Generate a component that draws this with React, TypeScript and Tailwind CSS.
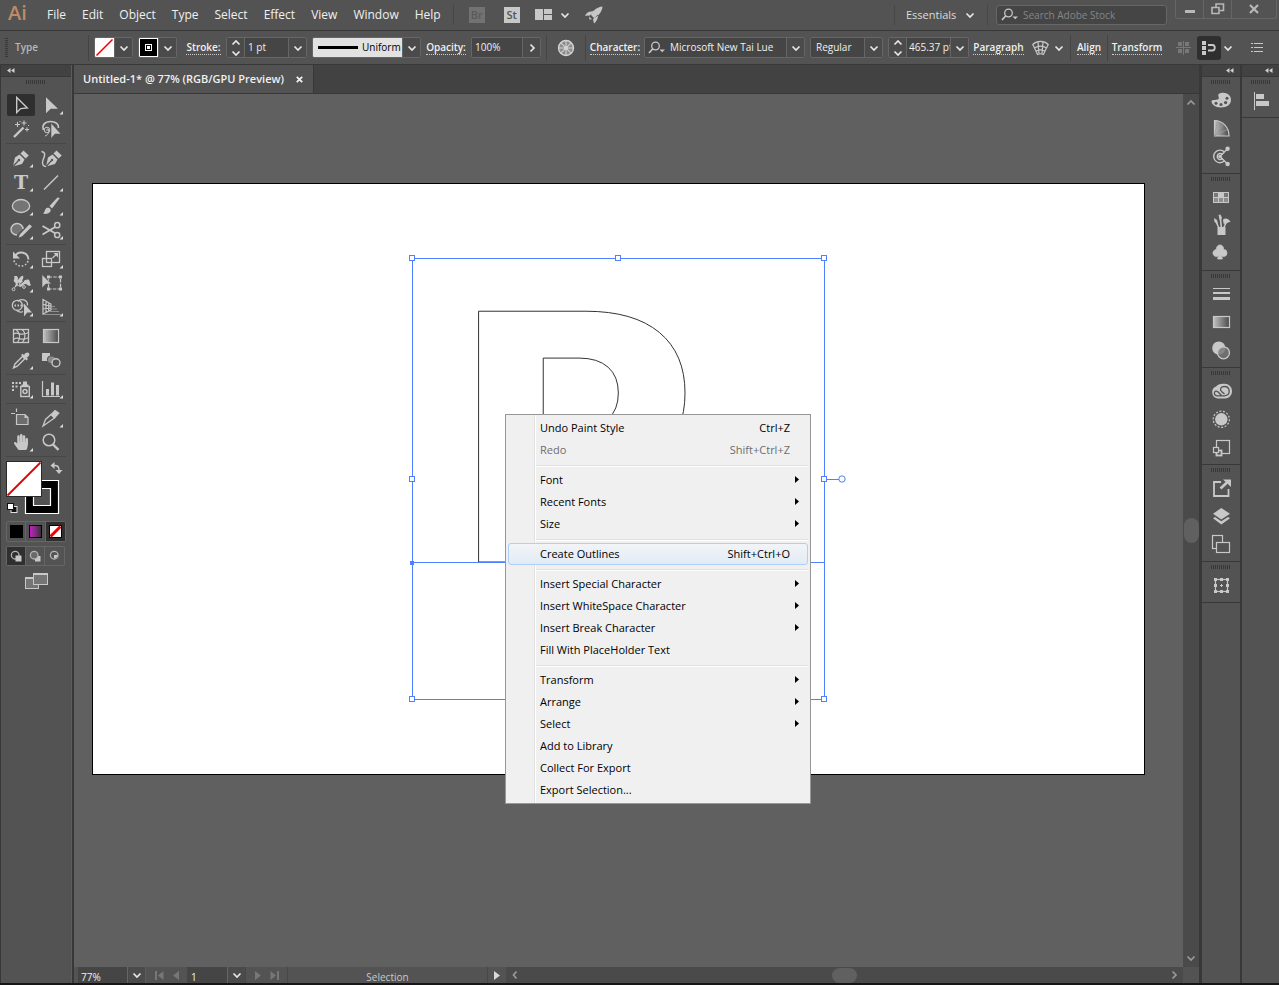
import { ReactNode } from "react";
import clsx from "clsx";
import { BsSuitClubFill } from "react-icons/bs";
import { FaHandPaper } from "react-icons/fa";

type Tool = { name: string; art: ReactNode; more?: boolean };

const INK = "#c8c8c8";
const PANEL = "#535353";

const menus = ["File", "Edit", "Object", "Type", "Select", "Effect", "View", "Window", "Help"];

const penNib = (
  <>
    <path d="M6 20.5 8 11.5 12.5 8.5 17.5 13.5 15 18Z" fill={INK} stroke="none" />
    <path d="M13.5 7.5 16.5 4.5 21.8 9.5 18.6 12.6Z" fill={INK} stroke="none" />
    <path d="M6 20.5 11.5 14.5" stroke={PANEL} strokeWidth="1.2" />
    <circle cx="12" cy="14" r="1.2" fill={PANEL} stroke="none" />
  </>
);

const toolGroups: Tool[][] = [
  [
    { name: "Selection", art: <path d="M9.7 4.5V19.5L13.6 15.6 20.3 15Z" strokeWidth="1.4" /> },
    { name: "Direct Selection", more: true, art: <path d="M9 4.2V20.2L13.6 15.8H21Z" fill={INK} stroke="none" /> },
    {
      name: "Magic Wand",
      art: (
        <>
          <path d="M7 20 16.5 10.5" strokeWidth="2.4" />
          <path d="M10.5 5v5M8 7.5h5M17 3.5v5M14.5 6h5M20 10.5v4M18 12.5h4M13 4v1M21 8.5h1" strokeWidth="1.1" />
        </>
      ),
    },
    {
      name: "Lasso",
      art: (
        <>
          <path d="M6.5 13C4.5 8 8 4.5 13.5 4.5S22 7.5 21.5 11" strokeWidth="1.6" />
          <circle cx="10" cy="13" r="2.8" />
          <path d="M9 13h3M10.5 11.5C13 13 12 18 8 19" />
          <path d="M14 6V21.5L18 17H24Z" fill={INK} stroke={PANEL} strokeWidth="0.6" />
        </>
      ),
    },
  ],
  [
    { name: "Pen", more: true, art: penNib },
    {
      name: "Curvature",
      art: (
        <>
          <g transform="translate(3 0)">{penNib}</g>
          <path d="M4.5 5.5C9.5 6.5 7.5 10.5 6 14C4.5 18.5 6.5 20.5 9 20.5" strokeWidth="1.4" />
        </>
      ),
    },
    {
      name: "Type",
      more: true,
      art: (
        <text x="14" y="19" textAnchor="middle" fill={INK} stroke="none" className="font-['DejaVu_Serif',serif] text-[19px] font-bold">
          T
        </text>
      ),
    },
    { name: "Line Segment", more: true, art: <path d="M7 19.5 21 5.5" strokeWidth="1.4" /> },
    { name: "Ellipse", more: true, art: <ellipse cx="14" cy="12" rx="8.7" ry="6.5" fill="#757575" strokeWidth="1.3" /> },
    {
      name: "Paintbrush",
      more: true,
      art: (
        <>
          <path d="M22.8 4 20.5 3.6 12.5 12 15 14.6Z" fill={INK} stroke="none" />
          <path d="M6 19.5C8 18.5 7.5 15 10 13.8 12.5 13 14.5 15.5 13.4 17.5 12 20 8.5 20.3 6 19.5Z" fill={INK} stroke="none" />
        </>
      ),
    },
    {
      name: "Shaper",
      more: true,
      art: (
        <>
          <path d="M10 17C6.5 17 4 14.5 4 11.3S6.7 5.5 10 5.5 16 8 16 11" fill="#757575" strokeWidth="1.4" />
          <path d="M11.5 19.8 13 16.2 22.5 6.3 25 8.4 15.2 18.3Z" fill={INK} stroke="none" />
        </>
      ),
    },
    {
      name: "Scissors",
      more: true,
      art: (
        <>
          <circle cx="20.2" cy="7.2" r="2.6" strokeWidth="1.5" />
          <circle cx="20.2" cy="17" r="2.6" strokeWidth="1.5" />
          <path d="M5.5 8 18.2 15.2M5.5 16.5 18.2 9" strokeWidth="1.8" />
        </>
      ),
    },
  ],
  [
    {
      name: "Rotate",
      more: true,
      art: (
        <>
          <path d="M8.5 8.5C12 3.5 21 5 21.5 12.5" strokeWidth="2" />
          <path d="M6 4.5V11.5H13Z" fill={INK} stroke="none" />
          <path d="M21 14C19 20.5 9 21 7 13.5" strokeWidth="1.6" strokeDasharray="1.6 1.8" />
        </>
      ),
    },
    {
      name: "Scale",
      more: true,
      art: (
        <>
          <rect x="9.5" y="4.5" width="13" height="11" strokeWidth="1.3" />
          <rect x="5.5" y="11.5" width="9" height="8" strokeWidth="1.3" />
          <path d="M15.5 11 20 6.8" strokeWidth="1.3" />
          <path d="M16.5 6H21V10.5Z" fill={INK} stroke="none" />
        </>
      ),
    },
    {
      name: "Width",
      more: true,
      art: (
        <>
          <path d="M7 5.5C10 4 12 6.5 10.5 9.5 13 6.5 14.5 4 16 5 17.5 6.5 14.5 9.5 15.5 10.5 17.5 10 20 7.5 22 9 23.5 10.5 22.5 13 24 14 21 16.5 20.5 12.5 18 13 15.5 14 14.5 17 12 15.5 10.5 14 9 17 6.5 17.5 9 14 9.5 12 7.5 11 5.5 9.5 8.5 8 7 5.5Z" fill={INK} stroke="none" />
          <path d="M7 18 17 10" stroke={PANEL} />
          <circle cx="6.5" cy="18.3" r="1.4" fill={PANEL} />
          <circle cx="11.5" cy="13" r="1.4" fill={PANEL} />
          <circle cx="17" cy="16" r="1.4" fill={PANEL} />
        </>
      ),
    },
    {
      name: "Free Transform",
      art: (
        <>
          <rect x="11.5" y="6" width="12" height="12" strokeWidth="1.2" strokeDasharray="3.5 1.2" />
          <path d="M10 4.5h3v3h-3zM22 4.5h3v3h-3zM10 16.5h3v3h-3zM22 16.5h3v3h-3z" fill={INK} stroke="none" />
          <path d="M5 3.5V17L8.8 13H14.5Z" fill={INK} stroke={PANEL} strokeWidth="0.6" />
        </>
      ),
    },
    {
      name: "Shape Builder",
      more: true,
      art: (
        <>
          <circle cx="10.3" cy="10.3" r="5" strokeWidth="1.3" />
          <path d="M11 6.5C13 3.5 21 4 20.5 10.5M9.5 15C11 17 14 17.5 16 16.5" strokeWidth="1.3" />
          <path d="M7.5 10.5H17" strokeWidth="1.8" strokeDasharray="1.5 1.5" />
          <path d="M17 8.5V21.5L20.3 17.5H25Z" fill={INK} stroke="none" />
        </>
      ),
    },
    {
      name: "Perspective Grid",
      more: true,
      art: (
        <>
          <path d="M6 4.5V19L14 15V9ZM6 9.3 14 11M6 14 14 13M9 6V17.5M11.7 7.5V16" strokeWidth="1.2" />
          <path d="M15 11.5H18M14.5 14H20M12 16.5H22M6 19.5H24" stroke="#909090" strokeWidth="1.2" />
        </>
      ),
    },
  ],
  [
    {
      name: "Mesh",
      art: (
        <>
          <rect x="6.5" y="5.5" width="15" height="13" strokeWidth="1.3" />
          <path d="M6.5 10C11 6.5 13 13.5 21.5 8.5M6.5 15.5C11 11 14 18.5 21.5 13.5M9 5.5C13 9 13.5 14 10.5 18.5M15 5.5C19.5 9 18 15 15.5 18.5" strokeWidth="1.2" />
        </>
      ),
    },
    { name: "Gradient", art: <rect x="6.5" y="5.5" width="15" height="13" fill="url(#fade)" strokeWidth="1.2" /> },
    {
      name: "Eyedropper",
      more: true,
      art: (
        <>
          <path d="M6.5 20 8 16 15.5 8.5 17.8 10.8 10.3 18.2Z" strokeWidth="1.4" />
          <path d="M14 7 15.5 5.8 17 7C18.5 4.5 21 4 22 5.2 23 6.5 22 8.5 19.8 9.8L21 11 19.5 12.5Z" fill={INK} stroke="none" />
        </>
      ),
    },
    {
      name: "Blend",
      art: (
        <>
          <rect x="5" y="5" width="8" height="8" fill={INK} stroke="none" />
          <rect x="10.5" y="8" width="8" height="7.5" rx="3" fill="#8a8a8a" stroke={PANEL} />
          <circle cx="19" cy="14.8" r="4" fill={PANEL} strokeWidth="1.4" />
        </>
      ),
    },
  ],
  [
    {
      name: "Symbol Sprayer",
      more: true,
      art: (
        <>
          <path d="M5 5h2v2H5zM8.5 5h2v2h-2zM12 5h2v2h-2zM5 8.5h2v2H5zM8.5 8.5h2v2h-2zM5 12h2v2H5z" fill={INK} stroke="none" />
          <path d="M16 4.5h4V7.5h1.5v1.5h-7V7.5H16Z" fill={INK} stroke="none" />
          <rect x="13.8" y="9.5" width="8.5" height="10" strokeWidth="1.4" />
          <circle cx="18" cy="14.5" r="2" strokeWidth="1.5" />
        </>
      ),
    },
    {
      name: "Column Graph",
      more: true,
      art: (
        <>
          <path d="M5.5 4V19.5H23" strokeWidth="1.2" />
          <path d="M9 12h3v6.5H9zM14 5.5h3v13h-3zM19 8h3v10.5h-3z" fill={INK} stroke="none" />
        </>
      ),
    },
  ],
  [
    {
      name: "Artboard",
      art: (
        <>
          <path d="M4 7.5H8M9.5 2.5V6" strokeWidth="1.2" />
          <path d="M9.5 8.5H18L21 11.5V18.5H9.5Z" fill="#6d6d6d" strokeWidth="1.2" />
          <path d="M17.5 8.5V12H21Z" fill={INK} stroke="none" />
        </>
      ),
    },
    {
      name: "Slice",
      more: true,
      art: (
        <>
          <path d="M6 20 8.5 13.5 14 8.5 17.5 12Z" strokeWidth="1.3" />
          <path d="M13.5 8.3 18 3.8 22.7 7 17.8 12.5Z" fill={INK} stroke="none" />
        </>
      ),
    },
    { name: "Hand", more: true, art: <FaHandPaper x="6" y="4" width="17" height="17" fill={INK} stroke="none" /> },
    {
      name: "Zoom",
      art: (
        <>
          <circle cx="12" cy="10" r="5.8" strokeWidth="1.5" />
          <path d="M16 14.5 21.5 19.8" strokeWidth="2.4" />
        </>
      ),
    },
  ],
];

const dockGroups: Tool[][] = [
  [
    {
      name: "Color",
      art: (
        <>
          <path d="M14 7C20 6 24 9.5 24 14S20 21.5 14 21.5 4.5 18 4.5 15.5C4.5 12.5 9.5 15 11.5 13 13 11 8.5 8.5 14 7Z" fill={INK} stroke="none" />
          <g fill={PANEL} stroke="none">
            <circle cx="9" cy="17.3" r="1.5" />
            <circle cx="14" cy="18.5" r="1.5" />
            <circle cx="18.6" cy="16.6" r="1.6" />
            <circle cx="20" cy="12.3" r="1.5" />
          </g>
        </>
      ),
    },
    {
      name: "Color Guide",
      art: (
        <>
          <path d="M7.5 6.5V22H22C22 13 15.5 6.5 7.5 6.5Z" fill="url(#fade)" strokeWidth="1.2" />
          <path d="M7.5 22 10.5 8M7.5 22 16 10.5M7.5 22 20 15.5" stroke="#9a9a9a" strokeWidth="0.8" />
        </>
      ),
    },
    {
      name: "Color Themes",
      art: (
        <>
          <path d="M17.5 10A6.3 6.3 0 1 0 17.5 18.8M15.5 12.5A3 3 0 1 0 15.5 16.5" strokeWidth="1.4" />
          <path d="M13 14.5 20.5 6.8M13 14.5 20.5 22" strokeWidth="1.3" />
          <circle cx="13" cy="14.5" r="1.8" fill={INK} stroke="none" />
          <circle cx="20.6" cy="6.8" r="2.2" fill={INK} stroke="none" />
          <circle cx="20.6" cy="22" r="2.2" fill={INK} stroke="none" />
        </>
      ),
    },
  ],
  [
    {
      name: "Swatches",
      art: (
        <>
          <rect x="6" y="9" width="16" height="11" fill={INK} stroke="none" />
          <path d="M7 10h4v4H7zM17 10h4v4h-4z" fill="#777777" stroke="none" />
          <path d="M7 15h4v4H7zM12 15h4v4h-4zM17 15h4v4h-4z" fill="#8e8e8e" stroke="none" />
        </>
      ),
    },
    {
      name: "Brushes",
      art: (
        <>
          <path d="M10.5 16h8v8h-8z" fill={INK} stroke="none" />
          <path d="M11.5 16 8.5 9.5M14.3 16 13.3 6M17 16 20 10" strokeWidth="1.6" />
          <path d="M7 7 10 9 11 13 7.5 11ZM11.5 4 13.5 3.5 15 7 13 10ZM16 8.5C19 6.5 22 8 23.5 11 20 11 19 14 16.5 12.5Z" fill={INK} stroke="none" />
        </>
      ),
    },
    { name: "Symbols", art: <BsSuitClubFill x="5" y="5" width="19" height="19" fill={INK} stroke={INK} strokeWidth="0.8" /> },
  ],
  [
    { name: "Stroke", art: <path d="M6 8h17v1H6zM6 12h17v2H6zM6 17h17v3H6z" fill={INK} stroke="none" /> },
    { name: "Gradient panel", art: <rect x="6.5" y="8.5" width="16" height="11" fill="url(#fade)" strokeWidth="1.2" /> },
    {
      name: "Transparency",
      art: (
        <>
          <circle cx="11.8" cy="12" r="6.6" fill={INK} stroke="none" />
          <circle cx="16.5" cy="16.8" r="6" fill="#777777" fillOpacity="0.8" strokeWidth="1.3" />
        </>
      ),
    },
  ],
  [
    {
      name: "Libraries",
      art: (
        <>
          <path d="M10.5 21.5A6.3 6.3 0 0 1 9 9.5C11 7 15 6.5 17.5 6.8A7.2 7.2 0 0 1 18 21.5Z" fill={INK} stroke="none" />
          <path d="M14.5 18.5 10.8 14.8C7.5 12 5.5 18.5 10 18.8H17.5C24.5 18 23 9.5 17.5 9.5 13.5 9.5 12.5 12.5 14.5 14.5L17.5 17" stroke={PANEL} strokeWidth="1.3" />
        </>
      ),
    },
    {
      name: "Appearance",
      art: (
        <>
          <circle cx="14.3" cy="14.3" r="6.2" fill={INK} stroke="none" />
          <circle cx="14.3" cy="14.3" r="8.1" strokeWidth="1.2" strokeDasharray="2 1.6" />
        </>
      ),
    },
    {
      name: "Graphic Styles",
      art: (
        <>
          <rect x="9.5" y="7.5" width="13" height="13" strokeWidth="1.2" />
          <rect x="9.5" y="17.5" width="5" height="5" fill={PANEL} strokeWidth="1.8" />
          <rect x="6.5" y="14.5" width="5" height="5" fill={PANEL} strokeWidth="1.2" />
        </>
      ),
    },
  ],
  [
    {
      name: "Asset Export",
      art: (
        <>
          <path d="M14 8H7V22H21.5V15" strokeWidth="1.8" />
          <path d="M13.5 14.5 20 8.5" strokeWidth="2.6" />
          <path d="M16 5.5H24V13Z" fill={INK} stroke="none" />
        </>
      ),
    },
    {
      name: "Layers",
      art: (
        <path d="M14.3 6 23 11.8 14.3 17.5 6 11.8ZM6 16.2 8 15 14.3 19.2 21 15 23 16.2 14.3 22.5Z" fill={INK} stroke="none" />
      ),
    },
    {
      name: "Artboards",
      art: (
        <>
          <rect x="5.5" y="5.5" width="10" height="13" strokeWidth="1.2" />
          <rect x="9.5" y="12.5" width="13" height="10" fill={PANEL} strokeWidth="1.2" />
        </>
      ),
    },
  ],
  [
    {
      name: "Transform",
      art: (
        <>
          <rect x="8.5" y="8.5" width="12" height="12" strokeWidth="1.2" />
          <path d="M7 7h3v3H7zM13 7h3v3h-3zM19 7h3v3h-3zM7 13h3v3H7zM19 13h3v3h-3zM7 19h3v3H7zM13 19h3v3h-3zM19 19h3v3h-3z" fill={INK} stroke="none" />
          <path d="M14.5 13v3M13 14.5h3" />
        </>
      ),
    },
  ],
];

const alignDock: Tool[][] = [
  [{ name: "Align", art: <path d="M7 6h1v18H7zM9 8h8v5H9zM9 15h13v5H9z" fill={INK} stroke="none" /> }],
];

type MenuItem = { label: string; keys?: string; sub?: boolean; disabled?: boolean; active?: boolean };

const contextMenu: MenuItem[][] = [
  [
    { label: "Undo Paint Style", keys: "Ctrl+Z" },
    { label: "Redo", keys: "Shift+Ctrl+Z", disabled: true },
  ],
  [
    { label: "Font", sub: true },
    { label: "Recent Fonts", sub: true },
    { label: "Size", sub: true },
  ],
  [{ label: "Create Outlines", keys: "Shift+Ctrl+O", active: true }],
  [
    { label: "Insert Special Character", sub: true },
    { label: "Insert WhiteSpace Character", sub: true },
    { label: "Insert Break Character", sub: true },
    { label: "Fill With PlaceHolder Text" },
  ],
  [
    { label: "Transform", sub: true },
    { label: "Arrange", sub: true },
    { label: "Select", sub: true },
    { label: "Add to Library" },
    { label: "Collect For Export" },
    { label: "Export Selection..." },
  ],
];

function Chevron({ dir = "down", color = "#e6e6e6" }: { dir?: "down" | "up" | "left" | "right"; color?: string }) {
  const d = {
    down: "M1.5 3.5 5 7 8.5 3.5",
    up: "M1.5 6.5 5 3 8.5 6.5",
    left: "M6.5 1.5 3.5 5 6.5 8.5",
    right: "M3.5 1.5 7 5 3.5 8.5",
  }[dir];
  return (
    <svg width="10" height="10" viewBox="0 0 10 10" fill="none" stroke={color} strokeWidth="1.7" className="shrink-0">
      <path d={d} />
    </svg>
  );
}

function Grip() {
  return <div className="h-[4px] w-[20px] bg-[repeating-linear-gradient(90deg,#383838_0_1px,#535353_1px_2px)]" />;
}

function Sep() {
  return <div className="h-[26px] w-px shrink-0 bg-[#454545]" />;
}

function Box({ className, children }: { className: string; children: ReactNode }) {
  return (
    <div className={clsx("flex h-[21px] shrink-0 items-stretch overflow-hidden rounded-[2px] border border-[#666666] bg-[#454545]", className)}>
      {children}
    </div>
  );
}

function DropButton({ label, dir = "down" }: { label: string; dir?: "down" | "right" }) {
  return (
    <button aria-label={label} className="flex w-[18px] shrink-0 items-center justify-center border-l border-[#666666] bg-[#4b4b4b]">
      <Chevron dir={dir} />
    </button>
  );
}

function Spinner({ label }: { label: string }) {
  return (
    <div className="flex w-[18px] shrink-0 flex-col items-center justify-center border-r border-[#666666] bg-[#4b4b4b]">
      <button aria-label={`Increase ${label}`}>
        <Chevron dir="up" />
      </button>
      <button aria-label={`Decrease ${label}`}>
        <Chevron />
      </button>
    </div>
  );
}

function PanelLink({ className, children }: { className: string; children: ReactNode }) {
  return (
    <a href="#" className={clsx("flex shrink-0 justify-center text-[10px] leading-[13px] font-semibold text-[#f0f0f0]", className)}>
      <span className="border-b border-dotted border-[#cccccc]">{children}</span>
    </a>
  );
}

function SearchGlyph() {
  return (
    <svg width="18" height="14" viewBox="0 0 18 14" fill="none" stroke={INK} strokeWidth="1.3" className="shrink-0">
      <circle cx="7.5" cy="5" r="3.8" />
      <path d="M4.8 7.8 1 12" strokeWidth="1.7" />
      <path d="M11.5 8.5H17L14.2 11.3Z" fill={INK} stroke="none" />
    </svg>
  );
}

function MenuBar() {
  return (
    <header className="flex h-[31px] shrink-0 items-center border-b border-[#383838] text-[12px]">
      <div className="w-[39px] pb-1 pl-2 text-[20px] leading-[24px] font-semibold text-[#bf8a67]">Ai</div>
      <nav className="flex">
        {menus.map((m) => (
          <button key={m} className="px-2 leading-[20px]">
            {m}
          </button>
        ))}
      </nav>
      <div className="ml-[4px] flex items-center gap-[15px]">
        <div className="h-5 w-px bg-[#464646]" />
        <button className="mr-1 h-4 w-4 bg-[#727272] text-[11px] leading-[16px] font-semibold text-[#5a5a5a]">Br</button>
        <button className="h-4 w-4 bg-[#c8c8c8] text-[11px] leading-[16px] font-semibold text-[#535353]">St</button>
        <button aria-label="Arrange documents" className="flex items-center gap-[7px]">
          <svg width="18" height="12" viewBox="0 0 18 12" fill={INK}>
            <path d="M0 0h8v11H0zM9 0h8v5H9zM9 6h8v5H9z" />
          </svg>
          <Chevron />
        </button>
        <button aria-label="GPU performance">
          <svg width="18" height="18" viewBox="0 0 18 18" fill={INK}>
            <path d="M17.5.5C12 1 8 4.5 6 9L9 12C13.5 10 17 6 17.5.5ZM6.5 5.5 9 4.5 5 9.5 0 9.8C1 7.5 3 5.5 6.5 5.5ZM13 8.5C13.5 12 11.5 15.5 9 17.5L8 13.3ZM4 10.5 7 13.3 4.5 13.5Z" />
          </svg>
        </button>
      </div>
      <div className="ml-auto flex h-full items-center">
        <div className="h-5 w-px bg-[#464646]" />
        <button className="flex w-[92px] items-center justify-between pr-[12px] pl-[11px] text-[11px] text-[#dcdcdc]">
          Essentials
          <Chevron />
        </button>
        <div className="h-5 w-px bg-[#464646]" />
        <label className="ml-2 flex h-5 w-[171px] items-center gap-1 rounded-[3px] border border-[#666666] bg-[#454545] pl-1">
          <SearchGlyph />
          <input placeholder="Search Adobe Stock" className="w-full min-w-0 bg-transparent text-[10px] outline-none placeholder:text-[#858585]" />
        </label>
        <div className="mr-[2px] ml-2 flex h-[19px] self-start rounded-b-[3px] border border-t-0 border-[#666666] text-[#b8b8b8]">
          <button aria-label="Minimize" className="flex w-7 items-center justify-center border-r border-[#666666]">
            <svg width="12" height="10" viewBox="0 0 12 10" fill="#b8b8b8">
              <path d="M1 6h10v3H1z" />
            </svg>
          </button>
          <button aria-label="Restore" className="flex w-7 items-center justify-center border-r border-[#666666]">
            <svg width="14" height="12" viewBox="0 0 14 12" fill="none" stroke="#b8b8b8" strokeWidth="1.6">
              <path d="M5 4V1H12.5V7.5H9M1 4.5H8V10.5H1Z" />
            </svg>
          </button>
          <button aria-label="Close" className="flex w-[44px] items-center justify-center">
            <svg width="10" height="10" viewBox="0 0 10 10" fill="none" stroke="#b8b8b8" strokeWidth="2.2">
              <path d="M1 1 9 9M9 1 1 9" />
            </svg>
          </button>
        </div>
      </div>
    </header>
  );
}

function ControlBar() {
  return (
    <div className="flex h-[34px] shrink-0 items-center gap-[5px] border-b border-[#383838] pl-[5px] text-[10px]">
      <div className="h-5 w-[3px] bg-[repeating-linear-gradient(180deg,#383838_0_1px,#535353_1px_2px)]" />
      <div className="w-[70px] pl-[2px] font-semibold text-[#b8b8b8]">Type</div>
      <Sep />
      <Box className="w-[39px]">
        <button aria-label="Fill" className="flex-1 bg-white">
          <svg viewBox="0 0 19 19" stroke="#f00000" strokeWidth="1.6">
            <path d="M1.5 17.5 17.5 1.5" />
          </svg>
        </button>
        <DropButton label="Fill swatches" />
      </Box>
      <Box className="w-[39px]">
        <button aria-label="Stroke color" className="flex-1 bg-black">
          <svg viewBox="0 0 19 19" fill="none" stroke="#ffffff">
            <rect x=".5" y=".5" width="18" height="18" />
            <rect x="6.5" y="6.5" width="6" height="6" />
            <rect x="8" y="8" width="3" height="3" fill="#ffffff" stroke="none" />
          </svg>
        </button>
        <DropButton label="Stroke swatches" />
      </Box>
      <PanelLink className="w-[39px] pl-[4px]">Stroke:</PanelLink>
      <Box className="w-[81px]">
        <Spinner label="stroke weight" />
        <input aria-label="Stroke weight" defaultValue="1 pt" className="min-w-0 flex-1 px-[3px] outline-none" />
        <DropButton label="Stroke weights" />
      </Box>
      <Box className="w-[109px]">
        <button className="flex flex-1 items-center gap-1 bg-[#e2e2e2] pl-[5px] font-medium text-black">
          <svg width="40" height="3" viewBox="0 0 40 3">
            <path d="M0 0h40v3H0z" />
          </svg>
          Uniform
        </button>
        <DropButton label="Width profile" />
      </Box>
      <PanelLink className="w-[40px]">Opacity:</PanelLink>
      <Box className="w-[70px]">
        <input aria-label="Opacity" defaultValue="100%" className="min-w-0 flex-1 px-[3px] outline-none" />
        <DropButton label="Opacity slider" dir="right" />
      </Box>
      <Sep />
      <button aria-label="Recolor artwork" className="flex w-[28px] justify-center">
        <svg width="18" height="18" viewBox="0 0 18 18" fill="none" stroke="#d2d2d2">
          <circle cx="9" cy="9" r="7.5" fill="#8c8c8c" strokeWidth="1.4" />
          <path d="M9 1.5v15M1.5 9h15M3.7 3.7l10.6 10.6M14.3 3.7 3.7 14.3" strokeWidth="1.1" />
          <circle cx="9" cy="9" r="2" fill="#d2d2d2" stroke="none" />
        </svg>
      </button>
      <Sep />
      <PanelLink className="w-[48px]">Character:</PanelLink>
      <Box className="w-[161px]">
        <label className="flex min-w-0 flex-1 items-center gap-1 pl-[3px]">
          <SearchGlyph />
          <input aria-label="Font family" defaultValue="Microsoft New Tai Lue" className="min-w-0 flex-1 outline-none" />
        </label>
        <DropButton label="Font families" />
      </Box>
      <Box className="w-[73px]">
        <input aria-label="Font style" defaultValue="Regular" className="min-w-0 flex-1 px-[5px] font-medium outline-none" />
        <DropButton label="Font styles" />
      </Box>
      <Box className="w-[81px]">
        <Spinner label="font size" />
        <input aria-label="Font size" defaultValue="465.37 pt" className="min-w-0 flex-1 pl-[2px] outline-none" />
        <DropButton label="Font sizes" />
      </Box>
      <PanelLink className="w-[49px]">Paragraph</PanelLink>
      <button aria-label="Make envelope" className="flex w-[37px] items-center justify-between pr-[1px] pl-[4px]">
        <svg width="17" height="16" viewBox="0 0 17 16" fill="none" stroke={INK} strokeWidth="1.2">
          <path d="M.8 4.5C5 .3 12 .3 16.2 4.5L13 11 11.5 14.5C9.5 13.5 7.5 13.5 5.5 14.5L4 11ZM2.5 8C6.5 5.5 10.5 5.5 14.5 8M4 11.2C7 9.5 10 9.5 13 11.2M6 2 7 14M11 2 10 14" />
        </svg>
        <Chevron />
      </button>
      <Sep />
      <PanelLink className="w-[26px]">Align</PanelLink>
      <Sep />
      <PanelLink className="w-[48px]">Transform</PanelLink>
      <div className="mr-4 ml-auto flex items-center gap-[6px]">
        <svg width="15" height="14" viewBox="0 0 15 14" fill="#787878">
          <path d="M2 1h4v4H2zM9 1h4v4H9zM2 8h4v4H2zM9 8h4v4H9zM7 0h1v14H7zM0 6h15v1H0z" />
        </svg>
        <button aria-label="Snap to pixel" className="flex h-6 w-6 items-center justify-center rounded-[3px] bg-[#2f2f2f]">
          <svg width="16" height="14" viewBox="0 0 16 14" fill={INK}>
            <path d="M1 0h4v4H1zM1 5h4v4H1zM1 10h4v4H1z" />
            <path d="M7 4H11.5C14.5 4 14.5 9.5 11.5 9.5H7" fill="none" stroke={INK} strokeWidth="1.8" />
          </svg>
        </button>
        <button aria-label="Snap options" className="-ml-1">
          <Chevron />
        </button>
        <button aria-label="Panel menu" className="ml-3">
          <svg width="12" height="10" viewBox="0 0 12 10" fill={INK}>
            <path d="M0 0h2v1H0zM3 0h9v1H3zM0 4h2v1H0zM3 4h9v1H3zM0 8h2v1H0zM3 8h9v1H3z" />
          </svg>
        </button>
      </div>
    </div>
  );
}

function CollapseBar({ right }: { right?: boolean }) {
  return (
    <div className={clsx("flex h-[12px] items-center border-b border-[#383838] bg-[#424242] px-[6px]", right && "justify-end")}>
      <button aria-label="Collapse panels">
        <svg width="8" height="5" viewBox="0 0 8 5" fill="#d0d0d0">
          <path d="M3.5 0V5L0 2.5ZM7.5 0V5L4 2.5Z" />
        </svg>
      </button>
    </div>
  );
}

function ToolButton({ tool, selected }: { tool: Tool; selected?: boolean }) {
  return (
    <button
      aria-label={tool.name}
      className={clsx("my-px h-[22px] w-[28px] rounded-[2px]", selected && "bg-[#2f2f2f]")}
    >
      <svg width="28" height="22" viewBox="0 1 28 22" fill="none" stroke={INK}>
        {tool.art}
        {tool.more && <path d="M26 18V21.5H22.5Z" fill="#dcdcdc" stroke="none" />}
      </svg>
    </button>
  );
}

function PaintControls() {
  return (
    <div className="flex flex-col items-start">
      <svg width="60" height="56" viewBox="0 0 60 56" fill="none">
        <path d="M19.5 19.5H52.5V52.5H19.5ZM27.5 27.5H44.5V44.5H27.5Z" fill="#000000" fillRule="evenodd" stroke="#ffffff" strokeWidth="1.2" />
        <rect x=".5" y=".5" width="35" height="35" fill="#ffffff" stroke="#2b2b2b" />
        <path d="M1.5 34.5 34.5 1.5" stroke="#e00000" strokeWidth="1.8" />
        <path d="M47 4.5H49C52 4.5 53 6 53 9" stroke={INK} strokeWidth="1.4" />
        <path d="M48.5 1V8L44.5 4.5ZM49.5 9H56.5L53 13Z" fill={INK} />
        <rect x="5" y="45.5" width="6" height="6" fill="#111111" stroke="#e0e0e0" />
        <rect x="1.5" y="42.5" width="6" height="6" fill="#ffffff" stroke="#111111" />
      </svg>
      <div className="mt-1 flex divide-x divide-[#666666] rounded-[2px] border border-[#666666]">
        <button aria-label="Color" className="flex h-[19px] w-[19px] items-center justify-center">
          <span className="h-[13px] w-[13px] bg-black" />
        </button>
        <button aria-label="Gradient fill" className="flex h-[19px] w-[20px] items-center justify-center">
          <span className="h-[13px] w-[13px] border border-black bg-linear-to-r from-[#c414c4] to-[#3a2a3a]" />
        </button>
        <button aria-label="None" className="flex h-[19px] w-[19px] items-center justify-center bg-[#2f2f2f]">
          <svg width="13" height="13" viewBox="0 0 13 13">
            <rect x=".5" y=".5" width="12" height="12" fill="#ffffff" stroke="#000000" />
            <path d="M1.5 11.5 11.5 1.5" stroke="#f00000" strokeWidth="3" />
          </svg>
        </button>
      </div>
      <div className="mt-1 flex divide-x divide-[#666666] rounded-[2px] border border-[#666666]">
        {["Draw Normal", "Draw Behind", "Draw Inside"].map((mode, i) => (
          <button
            key={mode}
            aria-label={mode}
            className={clsx("flex h-[18px] w-[19px] items-center justify-center", i === 0 && "bg-[#2f2f2f]")}
          >
            <svg width="12" height="12" viewBox="0 0 12 12" fill="none" stroke="#b4b4b4" strokeWidth="1.3">
              {i === 1 && <path d="M6 6h5.5v5.5H6z" fill={INK} stroke="none" />}
              <circle cx="5.2" cy="5.2" r="3.8" fill={i === 1 ? "#6a6a6a" : "none"} />
              {i === 0 && <path d="M5.5 5.5h6v6h-6z" fill={INK} stroke="none" />}
              {i === 2 && <path d="M5 5h4L7 8H5z" fill={INK} stroke="none" />}
            </svg>
          </button>
        ))}
      </div>
      <button aria-label="Change screen mode" className="mt-[7px] ml-[19px]">
        <svg width="23" height="16" viewBox="0 0 23 16" fill="#757575" stroke={INK}>
          <rect x=".5" y="4.5" width="13" height="11" />
          <path d="M.5 5.5h13" />
          <rect x="8.5" y=".5" width="14" height="11" />
          <path d="M8.5 1.5h14" />
        </svg>
      </button>
    </div>
  );
}

function Toolbar() {
  return (
    <aside className="w-[74px] shrink-0 border-r-2 border-l border-[#383838]">
      <div className="h-full border-r border-[#5c5c5c]">
        <CollapseBar />
        <div className="flex h-4 justify-center pt-[3px]">
          <Grip />
        </div>
        <div className="px-[5px]">
          {toolGroups.map((group, g) => (
            <div key={g} className="mb-[2px] border-b border-[#474747] pb-[2px]">
              <div className="ml-px grid w-[58px] grid-cols-2 gap-x-[2px]">
                {group.map((tool) => (
                  <ToolButton key={tool.name} tool={tool} selected={tool.name === "Selection"} />
                ))}
              </div>
            </div>
          ))}
          <div className="pt-[2px]">
            <PaintControls />
          </div>
        </div>
      </div>
    </aside>
  );
}

function Dock({ groups, className }: { groups: Tool[][]; className: string }) {
  return (
    <aside className={clsx("shrink-0 border-l-2 border-[#383838]", className)}>
      <CollapseBar right />
      {groups.map((group, g) => (
        <div key={g} className="flex flex-col items-center border-b border-[#383838] pb-[3px]">
          <div className="flex h-[9px] items-center">
            <Grip />
          </div>
          {group.map((panel) => (
            <button key={panel.name} aria-label={panel.name} className="h-7 w-7">
              <svg width="28" height="28" viewBox="0 0 28 28" fill="none" stroke={INK}>
                {panel.art}
              </svg>
            </button>
          ))}
        </div>
      ))}
    </aside>
  );
}

// Bounding box of the selected type object, in artboard pixels
function SelectedType() {
  const handles = [
    [319, 74],
    [525, 74],
    [731, 74],
    [319, 295],
    [731, 295],
    [319, 515],
    [731, 515],
  ];
  return (
    <svg width="1051" height="590" viewBox="0 0 1051 590" className="block">
      <text x="354" y="378" fill="none" stroke="#333333" className="font-['DejaVu_Sans',sans-serif] text-[344px] font-bold">
        P
      </text>
      <g fill="none" stroke="#4f80ff" shapeRendering="crispEdges">
        <rect x="319.5" y="74.5" width="412" height="441" />
        <path d="M319 378.5H731M731 295.5H746" />
      </g>
      {handles.map(([x, y]) => (
        <rect key={`${x}-${y}`} x={x - 2.5} y={y - 2.5} width="5" height="5" fill="#ffffff" stroke="#4f80ff" />
      ))}
      <rect x="317" y="377" width="4" height="4" fill="#4f80ff" />
      <circle cx="749" cy="295" r="3.2" fill="#ffffff" stroke="#4f80ff" />
    </svg>
  );
}

function ContextMenu() {
  return (
    <div
      role="menu"
      className="absolute top-[320px] left-[431px] w-[306px] border border-[#979797] bg-[#f0f0f0] bg-[linear-gradient(90deg,transparent_28px,#e0e0e0_28px_29px,#ffffff_29px_30px,transparent_30px)] p-[2px] text-[11px] text-black"
    >
      {contextMenu.map((section, s) => (
        <div key={s}>
          {s > 0 && <div className="mt-[4px] mb-[2px] ml-[28px] h-[2px] border-b border-white bg-[#e0e0e0]" />}
          {section.map((item) => (
            <button
              key={item.label}
              role="menuitem"
              disabled={item.disabled}
              className={clsx(
                "flex h-[22px] w-full items-center justify-between rounded-[3px] border pr-[8px] pl-[31px]",
                item.active ? "border-[#aecff7] bg-linear-to-b from-[#f2f4f7] to-[#e2ebf5]" : "border-transparent",
                item.disabled && "text-[#6d6d6d]",
              )}
            >
              {item.label}
              {item.keys && <span className="pr-[9px]">{item.keys}</span>}
              {item.sub && (
                <svg width="4" height="8" viewBox="0 0 4 8">
                  <path d="M0 0 4 3.5 0 7Z" />
                </svg>
              )}
            </button>
          ))}
        </div>
      ))}
    </div>
  );
}

function StatusBar() {
  return (
    <footer className="flex h-[16px] shrink-0 items-stretch bg-[#535353] pl-1 text-[10px] leading-[16px]">
      <input aria-label="Zoom level" defaultValue="77%" className="w-[49px] bg-[#454545] px-[3px] pt-1 outline-none" />
      <DropButton label="Zoom levels" />
      <div className="flex w-[42px] items-center justify-center gap-[9px] border-l border-[#5e5e5e]">
        <button aria-label="First artboard" disabled>
          <svg width="9" height="9" viewBox="0 0 9 9" fill="#777777">
            <path d="M0 0h2v9H0zM8.5 0V9L3 4.5Z" />
          </svg>
        </button>
        <button aria-label="Previous artboard" disabled>
          <svg width="6" height="9" viewBox="0 0 6 9" fill="#777777">
            <path d="M6 0V9L0 4.5Z" />
          </svg>
        </button>
      </div>
      <input aria-label="Artboard" defaultValue="1" className="w-[40px] bg-[#454545] px-[4px] pt-1 outline-none" />
      <DropButton label="Artboards list" />
      <div className="flex w-[43px] items-center justify-center gap-[9px] border-x border-[#474747]">
        <button aria-label="Next artboard" disabled>
          <svg width="6" height="9" viewBox="0 0 6 9" fill="#777777">
            <path d="M0 0V9L6 4.5Z" />
          </svg>
        </button>
        <button aria-label="Last artboard" disabled>
          <svg width="9" height="9" viewBox="0 0 9 9" fill="#777777">
            <path d="M7 0h2v9H7zM.5 0V9L6 4.5Z" />
          </svg>
        </button>
      </div>
      <div className="w-[200px] border-r border-[#474747] pt-[2px] text-center font-medium text-[#c8c8c8]">Selection</div>
      <button aria-label="Status options" className="flex w-[18px] items-center justify-center">
        <svg width="6" height="9" viewBox="0 0 6 9" fill="#d8d8d8">
          <path d="M0 0V9L6 4.5Z" />
        </svg>
      </button>
      <div className="flex flex-1 items-center justify-between bg-[#4a4a4a] px-[4px]">
        <button aria-label="Scroll left">
          <Chevron dir="left" color="#9a9a9a" />
        </button>
        <div className="h-[15px] w-[25px] rounded-full bg-[#606060]" />
        <button aria-label="Scroll right">
          <Chevron dir="right" color="#9a9a9a" />
        </button>
      </div>
      <div className="w-[16px]" />
    </footer>
  );
}

export default function App() {
  return (
    <div className="flex h-screen flex-col overflow-hidden border-b-2 border-[#161616] bg-[#535353] font-['Open_Sans','Noto_Sans',sans-serif] text-[#f0f0f0]">
      <svg width="0" height="0" className="absolute">
        <linearGradient id="fade">
          <stop offset="0" stopColor="#c0c0c0" />
          <stop offset="1" stopColor="#4a4a4a" />
        </linearGradient>
      </svg>
      <MenuBar />
      <ControlBar />
      <div className="flex min-h-0 flex-1">
        <Toolbar />
        <main className="flex min-w-0 flex-1 flex-col border-r border-[#383838]">
          <div className="flex h-[29px] shrink-0 border-b border-[#383838] bg-[#424242]">
            <div className="flex w-[240px] items-center justify-between border-r border-[#383838] bg-[#535353] pr-[10px] pl-[9px] text-[11px] font-semibold whitespace-nowrap">
              Untitled-1* @ 77% (RGB/GPU Preview)
              <button aria-label="Close document">
                <svg width="7" height="7" viewBox="0 0 7 7" stroke="#f0f0f0" strokeWidth="1.8">
                  <path d="M.8 .8 6.2 6.2M6.2 .8 .8 6.2" />
                </svg>
              </button>
            </div>
          </div>
          <div className="flex min-h-0 flex-1">
            <div className="relative min-w-0 flex-1 overflow-hidden bg-[#606060]">
              <div className="absolute top-[89px] left-[18px] border border-black bg-white">
                <SelectedType />
              </div>
              <ContextMenu />
            </div>
            <div className="flex w-[16px] flex-col items-center justify-between bg-[#4a4a4a] py-1">
              <button aria-label="Scroll up">
                <Chevron dir="up" color="#9a9a9a" />
              </button>
              <div className="h-[25px] w-[15px] rounded-full bg-[#606060]" />
              <button aria-label="Scroll down">
                <Chevron color="#9a9a9a" />
              </button>
            </div>
          </div>
          <StatusBar />
        </main>
        <Dock groups={dockGroups} className="w-[40px]" />
        <Dock groups={alignDock} className="w-[39px]" />
      </div>
    </div>
  );
}
